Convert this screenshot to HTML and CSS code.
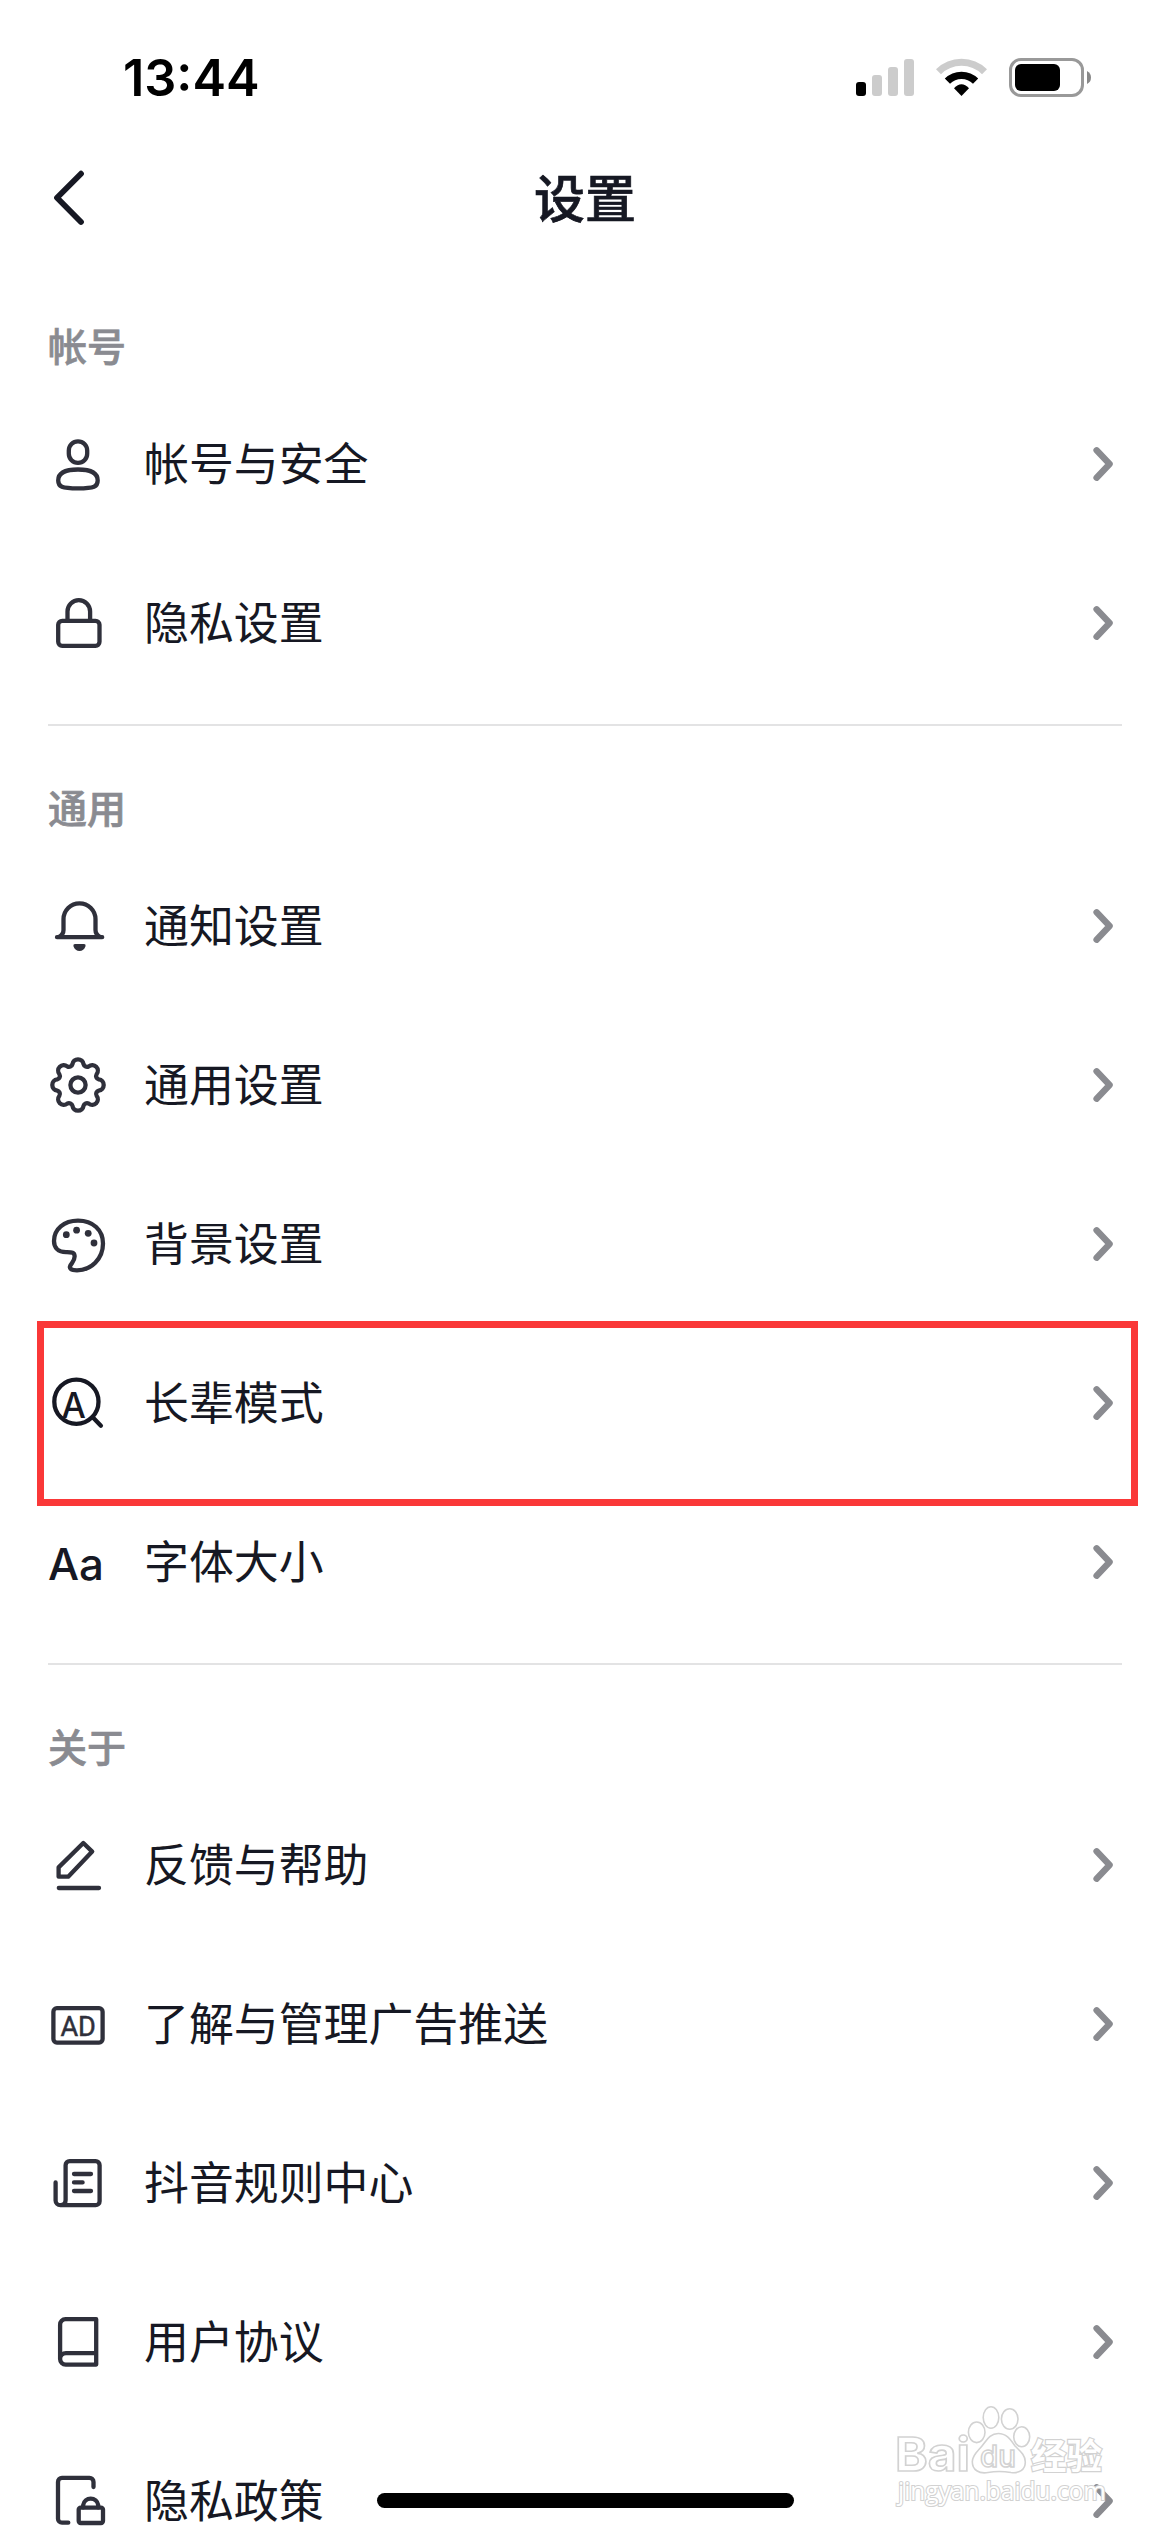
FILE: index.html
```html
<!DOCTYPE html>
<html lang="zh-CN">
<head>
<meta charset="utf-8">
<title>设置</title>
<link rel="stylesheet" href="styles.css">
</head>
<body>
<svg class="defs" width="0" height="0" aria-hidden="true">
  <symbol id="chevron" viewBox="0 0 26 40"><path d="M6.6 6.3 19.6 20 6.6 33.7" fill="none" stroke="#8a8b90" stroke-width="6.4" stroke-linecap="round" stroke-linejoin="round"/></symbol>
</svg>
<div class="screen">
  <div class="status">
    <span class="time">13:44</span>
    <svg class="status-icons" width="240" height="44" viewBox="854 56 240 44">
      <rect x="856" y="82" width="10" height="14" rx="3"/>
      <g fill="#ccc"><rect x="872" y="75" width="10" height="21" rx="3"/><rect x="888" y="67" width="10" height="29" rx="3"/><rect x="904" y="59" width="10" height="37" rx="3"/></g>
      <path d="M938.5 71.8A32.5 32.5 0 0 1 984.5 71.8" fill="none" stroke="#ccc" stroke-width="7"/>
      <path d="M947.4 81.2A20 20 0 0 1 975.6 81.2" fill="none" stroke="#000" stroke-width="7.4"/>
      <path d="M961.5 96 954 88.2Q961.5 80.4 969 88.2Z"/>
      <rect x="1010.5" y="59.5" width="72" height="36" rx="10.5" fill="none" stroke="#999" stroke-width="3"/>
      <rect x="1015" y="64" width="45" height="27" rx="6"/>
      <path d="M1087 71Q1091 73 1091 77.5T1087 84Z" fill="#888"/>
    </svg>
  </div>
  <header class="nav">
    <svg class="back" width="40" height="64" viewBox="50 166 40 64"><path d="M81 173.7 57 197.7 81 222" fill="none" stroke="#161823" stroke-width="5.8" stroke-linecap="round" stroke-linejoin="round"/></svg>
    <h1>设置</h1>
  </header>

  <section class="group">
    <h2>帐号</h2>
    <div class="row">
      <svg class="icon" viewBox="0 0 60 61"><rect x="20.8" y="7.3" width="18.4" height="21.6" rx="9.2"/><path d="M10.2 46.5C10.2 39.5 16.5 35.5 30 35.5S49.7 39.5 49.7 46.5C49.7 52.6 46.5 54.4 30 54.4S10.2 52.6 10.2 46.5Z"/></svg>
      <span class="name">帐号与安全</span><svg class="go"><use href="#chevron"/></svg>
    </div>
    <div class="row">
      <svg class="icon" viewBox="0 0 60 61"><rect x="10.2" y="27.8" width="41.3" height="25" rx="4"/><path d="M19.5 27.8V18.5A11.3 11.3 0 0 1 42.1 18.5V27.8"/></svg>
      <span class="name">隐私设置</span><svg class="go"><use href="#chevron"/></svg>
    </div>
  </section>

  <section class="group">
    <h2>通用</h2>
    <div class="row">
      <svg class="icon" viewBox="0 0 60 61"><path d="M9 41.2H54.2M11 40.8Q15.5 38.5 15.5 34V23.3A16 16 0 0 1 47.5 23.3V34Q47.5 38.5 52 40.8"/><path class="solid" d="M27 48H36Q38 48 37.6 50C36.6 53.2 34.2 55 31.5 55S26.4 53.2 25.4 50Q25 48 27 48Z"/></svg>
      <span class="name">通知设置</span><svg class="go"><use href="#chevron"/></svg>
    </div>
    <div class="row">
      <svg class="icon" viewBox="0 0 60 61"><circle cx="30" cy="30" r="7.6"/><path d="M50.77 24.44A5.6 5.6 0 0 1 50.77 35.56A3.5 3.5 0 0 0 48.62 40.75A5.6 5.6 0 0 1 40.75 48.62A3.5 3.5 0 0 0 35.56 50.77A5.6 5.6 0 0 1 24.44 50.77A3.5 3.5 0 0 0 19.25 48.62A5.6 5.6 0 0 1 11.38 40.75A3.5 3.5 0 0 0 9.23 35.56A5.6 5.6 0 0 1 9.23 24.44A3.5 3.5 0 0 0 11.38 19.25A5.6 5.6 0 0 1 19.25 11.38A3.5 3.5 0 0 0 24.44 9.23A5.6 5.6 0 0 1 35.56 9.23A3.5 3.5 0 0 0 40.75 11.38A5.6 5.6 0 0 1 48.62 19.25A3.5 3.5 0 0 0 50.77 24.44Z"/></svg>
      <span class="name">通用设置</span><svg class="go"><use href="#chevron"/></svg>
    </div>
    <div class="row">
      <svg class="icon" viewBox="0 0 60 61"><path d="M18 38.2C10 38.2 6 33.5 6 27C6 15 16 6.6 30 6.6C45 6.6 55 16 55 29.5C55 45 43 56.3 29 56.3C23 56.3 20.8 54.5 22.4 51.4C24 48.5 27 46.5 26.6 42C26.3 38 24 38.2 18 38.2Z"/><g class="solid"><circle cx="18.3" cy="20.7" r="3.4"/><circle cx="28.6" cy="16.2" r="3.4"/><circle cx="40.2" cy="19.3" r="3.4"/><circle cx="46" cy="29" r="3.4"/></g></svg>
      <span class="name">背景设置</span><svg class="go"><use href="#chevron"/></svg>
    </div>
    <div class="row">
      <svg class="icon dark" viewBox="0 0 60 61"><circle cx="28.4" cy="28.7" r="22.1"/><path d="M44.5 44 52.9 52.7"/><text class="lens" x="13.6" y="45.2" textLength="24.4" lengthAdjust="spacingAndGlyphs">A</text></svg>
      <span class="name">长辈模式</span><svg class="go"><use href="#chevron"/></svg>
    </div>
    <div class="row">
      <svg class="icon dark" viewBox="0 0 60 61"><text class="aa" x="0" y="48" textLength="56" lengthAdjust="spacingAndGlyphs">Aa</text></svg>
      <span class="name">字体大小</span><svg class="go"><use href="#chevron"/></svg>
    </div>
  </section>

  <section class="group">
    <h2>关于</h2>
    <div class="row">
      <svg class="icon" viewBox="0 0 60 61"><path d="M35.3 8 44.2 16.6 20.2 41.7H10.6V32.4ZM10.8 53H51"/></svg>
      <span class="name">反馈与帮助</span><svg class="go"><use href="#chevron"/></svg>
    </div>
    <div class="row">
      <svg class="icon" viewBox="0 0 60 61"><rect x="5.4" y="14.2" width="49.2" height="34.4" rx="3.5"/><text class="ad" x="12.4" y="41.5" textLength="35.5" lengthAdjust="spacingAndGlyphs">AD</text></svg>
      <span class="name">了解与管理广告推送</span><svg class="go"><use href="#chevron"/></svg>
    </div>
    <div class="row">
      <svg class="icon" viewBox="0 0 60 61"><path d="M17.6 47V12.2A4 4 0 0 1 21.6 8.2H47.6A4 4 0 0 1 51.6 12.2V48.2A4 4 0 0 1 47.6 52.2H12.4A4.8 4.8 0 0 1 7.6 47.4V29.5M17.6 47Q17.6 52.2 12.6 52.2M26 21H43M26 29.4H34.6M26 38H43"/></svg>
      <span class="name">抖音规则中心</span><svg class="go"><use href="#chevron"/></svg>
    </div>
    <div class="row">
      <svg class="icon" viewBox="0 0 60 61"><path d="M48.2 7.2H17.5A5.4 5.4 0 0 0 12.1 12.6V47A5.6 5.6 0 0 0 17.7 52.6H48.2ZM12.1 47A6 6 0 0 1 18 41.2H48.2"/></svg>
      <span class="name">用户协议</span><svg class="go"><use href="#chevron"/></svg>
    </div>
    <div class="row">
      <svg class="icon" viewBox="0 0 60 61"><path d="M45.5 16V10.9A4 4 0 0 0 41.5 6.9H14A4 4 0 0 0 10 10.9V47.7A4 4 0 0 0 14 51.7H20.3"/><rect x="30.7" y="36.6" width="24.3" height="15.4" rx="2"/><path d="M35.2 36.4V34A7.6 7.600 0 0 1 50.2 34V36.4"/></svg>
      <span class="name">隐私政策</span><svg class="go"><use href="#chevron"/></svg>
    </div>
  </section>

  <div class="highlight"></div>
  <div class="home"></div>
  <svg class="watermark" width="220" height="110" viewBox="0 0 220 110">
    <g class="mark">
      <text class="bai" x="5" y="71" textLength="75" lengthAdjust="spacingAndGlyphs">Bai</text>
      <ellipse cx="86.7" cy="32.3" rx="8.3" ry="10.3"/><ellipse cx="101" cy="17.5" rx="7.8" ry="10.8"/><ellipse cx="119.7" cy="19" rx="8.3" ry="10.3"/><ellipse cx="131.7" cy="36.7" rx="8" ry="10"/>
      <path d="M108.3 33.5C117 33.5 121 40.5 125 46C130 51 135.3 55 135.3 62C135.3 70 129 73.5 121 72.5C112 71 106 71 98 72.5C89 74 82.3 70 82.3 61.7C82.3 55 88 51 92 46C96.5 40.5 100 33.5 108.3 33.5Z"/>
      <text class="du" x="90" y="67" textLength="36" lengthAdjust="spacingAndGlyphs">du</text>
      <text class="exp" x="141" y="69" textLength="71" lengthAdjust="spacingAndGlyphs">经验</text>
      <text class="url" x="8" y="100" textLength="208" lengthAdjust="spacingAndGlyphs">jingyan.baidu.com</text>
    </g>
  </svg>
</div>
</body>
</html>
```
FILE: styles.css
```css
* { box-sizing: border-box; }

body {
  margin: 0;
  background: #fff;
  color: #161823;
  font-family: Inter, "Noto Sans CJK SC", sans-serif;
}

.defs { display: block; }

.screen {
  position: relative;
  width: 1170px;
  height: 2532px;
  overflow: hidden;
  display: flex;
  flex-direction: column;
}

.status {
  flex: none;
  display: flex;
  align-items: center;
  justify-content: space-between;
  height: 132px;
  padding: 24px 76px 0 123px;
  color: #000;
}

.time {
  font-size: 50.4px;
  font-weight: 600;
  line-height: 60px;
}

.nav {
  flex: none;
  display: grid;
  grid-template-columns: 40px 1fr 40px;
  align-items: center;
  height: 132px;
  padding: 0 50px;
}

.nav h1 {
  margin: 0;
  padding-top: 3px;
  font-size: 51px;
  font-weight: 500;
  line-height: 70px;
  text-align: center;
  -webkit-text-stroke: 0.7px currentColor;
}

.group {
  flex: none;
  margin: 0 48px;
  padding: 53px 0 21px;
}

.group + .group { border-top: 2px solid #e3e3e4; }

.group h2 {
  margin: 0 0 8px;
  color: #8a8b91;
  font-size: 39px;
  font-weight: 500;
  line-height: 60px;
  -webkit-text-stroke: 0.7px currentColor;
}

.row {
  display: flex;
  align-items: center;
  height: 159px;
}

.icon {
  flex: none;
  width: 60px;
  height: 61px;
  fill: none;
  stroke: #2f303b;
  stroke-width: 4.3;
  stroke-linecap: round;
  stroke-linejoin: round;
}

.icon.dark { stroke: #161823; }

.icon .solid { fill: #2f303b; stroke: none; }

.icon text { fill: #161823; stroke: none; }

.icon .lens { font-size: 36px; font-weight: 500; }

.icon .aa { font-size: 44px; font-weight: 500; }

.icon .ad { fill: #2f303b; stroke: #2f303b; stroke-width: 0.5; font-family: Roboto, sans-serif; font-size: 28.5px; }

.name {
  flex: 1;
  margin-left: 36px;
  font-size: 44.9px;
  line-height: 64px;
}

.go {
  flex: none;
  width: 26px;
  height: 40px;
  margin: 0 6px 1px 0;
}

.highlight {
  position: absolute;
  left: 37px;
  top: 1321px;
  width: 1101px;
  height: 185px;
  border: 7px solid #fa3838;
}

.home {
  position: absolute;
  left: 377px;
  top: 2493px;
  width: 417px;
  height: 15px;
  border-radius: 8px;
  background: #000;
}

.watermark {
  position: absolute;
  left: 890px;
  top: 2400px;
}

.mark {
  fill: #fff;
  stroke: #d2d2d2;
  stroke-width: 1.6;
}

.bai { font-size: 47px; font-weight: 700; }

.du { font-size: 30px; font-weight: 500; }

.exp { font-size: 35px; font-weight: 700; paint-order: stroke; stroke-width: 2.4; }

.url { font-family: "Open Sans", sans-serif; font-size: 25px; paint-order: stroke; stroke-width: 2.2; }
```
